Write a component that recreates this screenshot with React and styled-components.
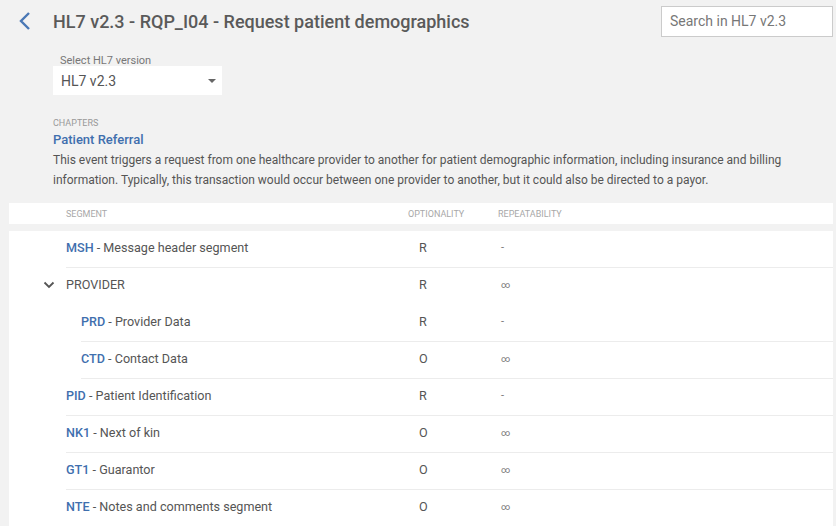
import React from 'react';
import styled, { createGlobalStyle } from 'styled-components';

const segments = [
  { code: 'MSH', name: 'Message header segment', opt: 'R', rep: '-' },
  { group: 'PROVIDER', opt: 'R', rep: '∞' },
  { code: 'PRD', name: 'Provider Data', opt: 'R', rep: '-', child: true },
  { code: 'CTD', name: 'Contact Data', opt: 'O', rep: '∞', child: true },
  { code: 'PID', name: 'Patient Identification', opt: 'R', rep: '-' },
  { code: 'NK1', name: 'Next of kin', opt: 'O', rep: '∞' },
  { code: 'GT1', name: 'Guarantor', opt: 'O', rep: '∞' },
  { code: 'NTE', name: 'Notes and comments segment', opt: 'O', rep: '∞' },
];

const App = () => {
  return (
    <Page>
      <GlobalStyle />
      <TopBar>
        <BackButton>
          <svg width="14" height="20" viewBox="0 0 14 20">
            <path d="M11 2 L3 10 L11 18" fill="none" stroke="#4a78b5" strokeWidth="2.4" />
          </svg>
        </BackButton>
        <Title>HL7 v2.3 - RQP_I04 - Request patient demographics</Title>
        <Search placeholder="Search in HL7 v2.3" />
      </TopBar>

      <Intro>
        <SelectField>
          <SelectLabel>Select HL7 version</SelectLabel>
          <SelectBox>
            <span>HL7 v2.3</span>
            <Caret />
          </SelectBox>
        </SelectField>

        <SmallCaps>Chapters</SmallCaps>
        <ChapterTitle>Patient Referral</ChapterTitle>
        <Description>
          This event triggers a request from one healthcare provider to another for patient demographic information, including insurance and billing
          information. Typically, this transaction would occur between one provider to another, but it could also be directed to a payor.
        </Description>
      </Intro>

      <TableHead>
        <HeadCell $w="342px">Segment</HeadCell>
        <HeadCell $w="90px">Optionality</HeadCell>
        <HeadCell>Repeatability</HeadCell>
      </TableHead>

      <TableBody>
        {segments.map((s, i) => (
          <Row key={i} $child={s.child} $line={!s.group}>
            <SegCell $child={s.child}>
              {s.group ? (
                <>
                  <Toggle>
                    <svg width="12" height="8" viewBox="0 0 12 8">
                      <path d="M1.5 1.5 L6 6 L10.5 1.5" fill="none" stroke="#555" strokeWidth="1.8" />
                    </svg>
                  </Toggle>
                  <GroupName>{s.group}</GroupName>
                </>
              ) : (
                <>
                  <Code>{s.code}</Code>
                  <Name> - {s.name}</Name>
                </>
              )}
            </SegCell>
            <OptCell>{s.opt}</OptCell>
            <RepCell $inf={s.rep === '∞'}>{s.rep}</RepCell>
          </Row>
        ))}
      </TableBody>
    </Page>
  );
};

export default App;

const GlobalStyle = createGlobalStyle`
  html, body {
    margin: 0;
    padding: 0;
    background: #f2f2f2;
  }
  body {
    font-family: Roboto, "Liberation Sans", sans-serif;
    color: #555;
    overflow: hidden;
  }
`;

const Page = styled.div`
  width: 836px;
  height: 526px;
  padding: 6px 3px 0 9px;
  box-sizing: border-box;
  background: #f2f2f2;
  overflow: hidden;
`;

const TopBar = styled.div`
  display: flex;
  align-items: center;
  height: 30px;
`;

const BackButton = styled.div`
  width: 44px;
  display: flex;
  align-items: center;
  padding-left: 9px;
  box-sizing: border-box;
  svg { display: block; }
`;

const Title = styled.h1`
  margin: 0;
  font-size: 18px;
  font-weight: 500;
  color: #5a5a5a;
  flex: 1;
  white-space: nowrap;
`;

const Search = styled.input`
  width: 172px;
  height: 31px;
  box-sizing: border-box;
  border: 1px solid #cbcbcb;
  background: #fff;
  padding: 0 8px;
  font-family: Roboto, "Liberation Sans", sans-serif;
  font-size: 14px;
  color: #555;
  outline: none;
  &::placeholder { color: #777; }
`;

const Intro = styled.div`
  padding-left: 44px;
`;

const SelectField = styled.div`
  margin-top: 19px;
  width: 169px;
`;

const SelectLabel = styled.div`
  font-size: 11px;
  color: #777;
  padding-left: 7px;
  line-height: 11px;
`;

const SelectBox = styled.div`
  height: 29px;
  background: #fff;
  display: flex;
  align-items: center;
  justify-content: space-between;
  padding: 0 6px 0 8px;
  font-size: 14px;
  color: #555;
`;

const Caret = styled.span`
  width: 0;
  height: 0;
  border-left: 4px solid transparent;
  border-right: 4px solid transparent;
  border-top: 4px solid #666;
`;

const SmallCaps = styled.div`
  margin-top: 23px;
  font-size: 9px;
  text-transform: uppercase;
  color: #999;
  line-height: 10px;
`;

const ChapterTitle = styled.div`
  margin-top: 4px;
  font-size: 13px;
  font-weight: 500;
  color: #3f6fae;
  line-height: 16px;
`;

const Description = styled.p`
  margin: 2px 0 0;
  font-size: 12px;
  line-height: 20px;
  color: #555;
`;

const TableHead = styled.div`
  margin-top: 13px;
  height: 21px;
  background: #fff;
  display: flex;
  align-items: center;
  padding-left: 57px;
`;

const HeadCell = styled.div`
  width: ${p => p.$w || 'auto'};
  font-size: 9px;
  text-transform: uppercase;
  color: #a8a8a8;
`;

const TableBody = styled.div`
  margin-top: 7px;
  background: #fff;
  height: 400px;
`;

const Row = styled.div`
  margin-left: ${p => (p.$child ? '72px' : '57px')};
  height: 37px;
  padding-bottom: 3px;
  box-sizing: border-box;
  display: flex;
  align-items: center;
  border-bottom: 1px solid ${p => (p.$line ? '#ececec' : 'transparent')};
  font-size: 12.6px;
`;

const SegCell = styled.div`
  width: ${p => (p.$child ? '327px' : '342px')};
  display: flex;
  align-items: center;
  white-space: nowrap;
`;

const Toggle = styled.span`
  width: 23px;
  margin-left: -23px;
  display: flex;
  svg { display: block; }
`;

const GroupName = styled.span`
  color: #555;
`;

const Code = styled.span`
  color: #3f6fae;
  font-weight: 500;
`;

const Name = styled.span`
  color: #555;
  white-space: pre;
`;

const OptCell = styled.div`
  width: 90px;
  padding-left: 11px;
  box-sizing: border-box;
  color: #555;
`;

const RepCell = styled.div`
  padding-left: 3px;
  color: #777;
  font-size: ${p => (p.$inf ? '9px' : '11px')};
`;
